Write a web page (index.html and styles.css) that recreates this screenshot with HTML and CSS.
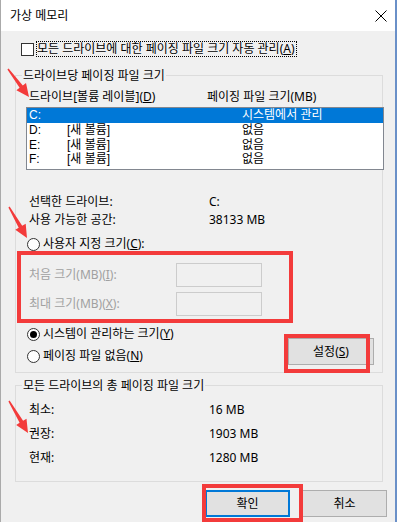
FILE: index.html
```html
<!DOCTYPE html>
<html lang="ko">
<head>
<meta charset="utf-8">
<title>가상 메모리</title>
<link rel="stylesheet" href="styles.css">
</head>
<body>
<div class="dialog">
  <div class="titlebar">
    <span class="title">가상 메모리</span>
    <svg class="close" width="12" height="12" viewBox="0 0 12 12"><path d="M0.5 0.5L11.5 11.5M11.5 0.5L0.5 11.5" stroke="#000" stroke-width="1" fill="none"/></svg>
  </div>
  <div class="body">
    <div class="auto-row">
      <span class="checkbox"></span>
      <span class="focus-label">모든 드라이브에 대한 페이징 파일 크기 자동 관리(<u>A</u>)</span>
    </div>

    <fieldset class="group group-drive">
      <legend>드라이브당 페이징 파일 크기</legend>
      <div class="col-head"><span>드라이브[볼륨 레이블](<u>D</u>)</span><span>페이징 파일 크기(MB)</span></div>
      <div class="listbox">
        <div class="lrow tall selected"><span>C:</span><span></span><span>시스템에서 관리</span></div>
        <div class="lrow tall"><span>D:</span><span>[새 볼륨]</span><span>없음</span></div>
        <div class="lrow"><span>E:</span><span>[새 볼륨]</span><span>없음</span></div>
        <div class="lrow"><span>F:</span><span>[새 볼륨]</span><span>없음</span></div>
      </div>
      <div class="info">
        <div class="irow"><span>선택한 드라이브:</span><span>C:</span></div>
        <div class="irow"><span>사용 가능한 공간:</span><span>38133 MB</span></div>
      </div>
      <div class="radio-row custom"><span class="radio"></span><span>사용자 지정 크기(<u>C</u>):</span></div>
      <div class="size-fields">
        <div class="frow"><span>처음 크기(MB)(<u>I</u>):</span><span class="textbox"></span></div>
        <div class="frow"><span>최대 크기(MB)(<u>X</u>):</span><span class="textbox"></span></div>
      </div>
      <div class="choice-row">
        <div class="radios">
          <div class="radio-row"><span class="radio checked"></span><span>시스템이 관리하는 크기(<u>Y</u>)</span></div>
          <div class="radio-row"><span class="radio"></span><span>페이징 파일 없음(<u>N</u>)</span></div>
        </div>
        <div class="btn btn-set">설정(<u>S</u>)</div>
      </div>
    </fieldset>

    <fieldset class="group group-total">
      <legend>모든 드라이브의 총 페이징 파일 크기</legend>
      <div class="totals">
        <div class="trow"><span>최소:</span><span>16 MB</span></div>
        <div class="trow"><span>권장:</span><span>1903 MB</span></div>
        <div class="trow"><span>현재:</span><span>1280 MB</span></div>
      </div>
    </fieldset>

    <div class="actions">
      <div class="btn btn-default">확인</div>
      <div class="btn">취소</div>
    </div>
  </div>
</div>

<svg class="annot" width="397" height="522" viewBox="0 0 397 522">
  <g fill="none" stroke="#f33b3b" stroke-width="4">
    <rect x="19" y="253" width="272" height="68"/>
    <rect x="286" y="336" width="82" height="35"/>
    <rect x="204" y="486" width="97" height="34"/>
  </g>
  <g fill="#f33b3b">
    <polygon points="7.4,69.4 19.6,87.8 16.4,90.2 29,97 26,83 22.8,85.4 8.6,68.6"/>
    <polygon points="8.4,207.4 18.7,227.8 15.3,229.8 27,238 25.7,223.8 22.2,225.8 9.6,206.6"/>
    <polygon points="8.4,401.4 19.6,422.8 16.2,424.9 28,433 26.5,418.8 23.1,420.8 9.6,400.6"/>
  </g>
</svg>
</body>
</html>
```

FILE: styles.css
```css
html, body {
  margin: 0;
  padding: 0;
  background: #f0f0f0;
}

body {
  font-family: "Noto Sans", "Noto Sans CJK KR", sans-serif;
  font-size: 12px;
  line-height: 16px;
  color: #000;
  width: 397px;
  height: 522px;
  overflow: hidden;
}

u {
  text-decoration: underline;
  text-underline-offset: 1px;
}

.dialog {
  box-sizing: border-box;
  width: 397px;
  height: 522px;
  border-left: 1px solid #aaaaaa;
  border-right: 2px solid #6a90c8;
  background: #f0f0f0;
  overflow: hidden;
}

.titlebar {
  height: 31px;
  background: #ffffff;
  display: flex;
  align-items: center;
  justify-content: space-between;
  padding: 0 8px 0 9px;
}

.title {
  font-size: 12px;
  line-height: 16px;
}

.close {
  display: block;
}

.body {
  padding-left: 14px;
}

.auto-row {
  margin-top: 10px;
  height: 16px;
  display: flex;
  align-items: center;
  padding-left: 6px;
}

.checkbox {
  box-sizing: border-box;
  width: 13px;
  height: 13px;
  border: 1px solid #333333;
  background: #ffffff;
  flex: none;
}

.focus-label {
  margin-left: 2px;
  border: 1px dotted #000;
  line-height: 14px;
  padding-right: 1px;
}

.group {
  box-sizing: border-box;
  width: 368px;
  margin: 0;
  padding: 0;
  border: 1px solid #dcdcdc;
  min-width: 0;
}

.group legend {
  margin-left: 6px;
  padding: 0 1px;
  line-height: 17px;
}

.group-drive {
  margin-top: 10px;
  padding-bottom: 7px;
}

.col-head {
  margin-top: 5px;
  display: grid;
  grid-template-columns: 178px auto;
  padding-left: 13px;
}

.listbox {
  box-sizing: border-box;
  margin-top: 2px;
  margin-left: 10px;
  width: 358px;
  height: 63px;
  border: 1px solid #828790;
  background: #ffffff;
  font-family: "Liberation Sans", "Noto Sans CJK KR", sans-serif;
}

.lrow {
  display: grid;
  grid-template-columns: 38px 175px auto;
  padding-left: 2px;
  height: 14px;
  line-height: 14px;
}

.lrow.tall {
  height: 15px;
  line-height: 15px;
}

.lrow.selected {
  background: #0078d7;
  color: #ffffff;
}

.info {
  margin-top: 23px;
  padding-left: 13px;
}

.irow {
  display: grid;
  grid-template-columns: 180px auto;
  line-height: 18px;
}

.radio-row {
  display: flex;
  align-items: center;
  height: 16px;
  padding-left: 11px;
}

.radio-row.custom {
  margin-top: 7px;
}

.radio {
  box-sizing: border-box;
  width: 13px;
  height: 13px;
  border: 1px solid #333333;
  border-radius: 50%;
  background: #ffffff;
  margin-right: 3px;
  flex: none;
  display: flex;
  align-items: center;
  justify-content: center;
}

.radio.checked::after {
  content: "";
  width: 7px;
  height: 7px;
  border-radius: 50%;
  background: #000;
}

.size-fields {
  margin-top: 11px;
  padding-left: 13px;
  display: flex;
  flex-direction: column;
  gap: 5px;
  color: #a0a0a0;
}

.frow {
  display: grid;
  grid-template-columns: 147px 86px;
  align-items: center;
}

.textbox {
  box-sizing: border-box;
  display: block;
  width: 86px;
  height: 24px;
  border: 1px solid #cccccc;
  background: #f0f0f0;
}

.choice-row {
  margin-top: 10px;
  display: flex;
  justify-content: space-between;
  align-items: flex-start;
}

.radios {
  display: flex;
  flex-direction: column;
  gap: 6px;
}

.btn {
  box-sizing: border-box;
  width: 85px;
  height: 27px;
  border: 1px solid #adadad;
  background: #e1e1e1;
  display: flex;
  align-items: center;
  justify-content: center;
}

.btn-set {
  width: 86px;
  margin-top: 12px;
  margin-right: 8px;
}

.btn-default {
  border: 2px solid #0078d7;
}

.group-total {
  margin-top: 4px;
  padding-bottom: 11px;
}

.totals {
  margin-top: 4px;
  padding-left: 13px;
}

.trow {
  display: grid;
  grid-template-columns: 180px auto;
  line-height: 24px;
}

.actions {
  margin-top: 8px;
  display: flex;
  justify-content: flex-end;
  gap: 12px;
  padding-right: 8px;
}

.annot {
  position: absolute;
  top: 0;
  left: 0;
  pointer-events: none;
}
```
